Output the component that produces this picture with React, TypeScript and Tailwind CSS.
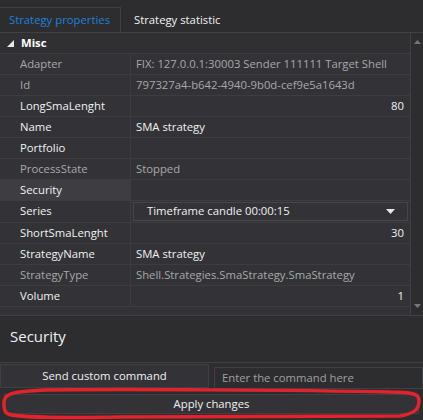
import React from 'react'

// property grid rows: [name, value, readOnly, kind]
type Row = { name: string; value?: string; ro?: boolean; kind?: 'num' | 'select'; selected?: boolean }

const rows: Row[] = [
  { name: 'Adapter', value: 'FIX: 127.0.0.1:30003 Sender 111111 Target Shell', ro: true },
  { name: 'Id', value: '797327a4-b642-4940-9b0d-cef9e5a1643d', ro: true },
  { name: 'LongSmaLenght', value: '80', kind: 'num' },
  { name: 'Name', value: 'SMA strategy' },
  { name: 'Portfolio' },
  { name: 'ProcessState', value: 'Stopped', ro: true },
  { name: 'Security', selected: true },
  { name: 'Series', value: 'Timeframe candle 00:00:15', kind: 'select' },
  { name: 'ShortSmaLenght', value: '30', kind: 'num' },
  { name: 'StrategyName', value: 'SMA strategy' },
  { name: 'StrategyType', value: 'Shell.Strategies.SmaStrategy.SmaStrategy', ro: true },
  { name: 'Volume', value: '1', kind: 'num' },
]

function GridRow({ r }: { r: Row }) {
  const label = r.ro ? 'text-[#a8a8a8]' : 'text-[#f1f1f1]'
  return (
    <div className={`flex border-b border-[#3c3c41] ${r.kind === 'select' ? 'h-[22px]' : 'h-[21px]'}`}>
      <div
        className={`w-[131px] shrink-0 pl-5 flex items-center border-r border-[#3c3c41] ${
          r.selected ? 'bg-[#3e3e42]' : ''
        } ${label}`}
      >
        {r.name}
      </div>
      {r.kind === 'select' ? (
        <div className="flex-1 px-[2px] py-[1px]">
          <div className="h-full border border-[#46464a] flex items-center pl-[13px] pr-[12px] text-[#f1f1f1]">
            <span className="flex-1">{r.value}</span>
            <svg width="9" height="5" viewBox="0 0 9 5">
              <path d="M0 0h9L4.5 5z" fill="#e8e8e8" />
            </svg>
          </div>
        </div>
      ) : (
        <div
          className={`flex-1 flex items-center whitespace-nowrap overflow-hidden ${
            r.kind === 'num' ? 'justify-end pr-[6px]' : 'pl-[5px]'
          } ${r.ro ? 'text-[#a8a8a8]' : 'text-[#f1f1f1]'}`}
        >
          {r.value}
        </div>
      )}
    </div>
  )
}

export default function App() {
  return (
    <div
      className="relative w-[423px] h-[420px] overflow-hidden bg-[#2d2d30] text-[11.3px] flex flex-col"
      style={{ fontFamily: '"Open Sans", "Noto Sans", sans-serif' }}
    >
      {/* tabs */}
      <div className="h-[33px] shrink-0 flex items-end border-b border-[#3f3f46]">
        <div className="h-[25px] w-[121px] border-t border-r border-[#3f3f46] flex items-center pl-[9px] pt-[1px] text-[#1c80d8]">
          Strategy properties
        </div>
        <div className="h-[25px] flex items-center pl-[13px] pt-[1px] text-[#f1f1f1]">Strategy statistic</div>
      </div>

      {/* property grid */}
      <div className="h-[283px] shrink-0 flex border-b border-[#3f3f46] bg-[#333337]">
        <div className="flex-1 flex flex-col">
          <div className="h-[21px] flex items-center border-b border-[#3c3c41] bg-[#303033]">
            <svg width="7" height="7" viewBox="0 0 7 7" className="ml-[7px] mr-[7px]">
              <path d="M7 0V7H0z" fill="#e8e8e8" />
            </svg>
            <span className="font-bold text-white">Misc</span>
          </div>
          {rows.map((r) => (
            <GridRow key={r.name} r={r} />
          ))}
        </div>
        <div className="w-[13px] shrink-0 border-l border-[#3f3f46] bg-[#2d2d30] flex flex-col items-center justify-between pt-[7px] pb-[7px]">
          <svg width="7" height="4" viewBox="0 0 7 4">
            <path d="M0 4h7L3.5 0z" fill="#777" />
          </svg>
          <svg width="7" height="4" viewBox="0 0 7 4">
            <path d="M0 0h7L3.5 4z" fill="#777" />
          </svg>
        </div>
      </div>

      {/* description */}
      <div className="h-[47px] shrink-0 flex items-center pl-[10px] pb-[6px] text-[15px] text-[#f1f1f1] border-b border-[#3f3f46]">
        Security
      </div>

      {/* command */}
      <div className="flex h-[27px] shrink-0 pt-[1px] gap-[5px]">
        <button className="w-[209px] h-[24px] bg-[#333337] border border-[#3f3f46] text-[#f1f1f1] text-[11.3px]">
          Send custom command
        </button>
        <div className="flex-1 mt-[3px] h-[22px] border border-[#3f3f46] bg-[#2d2d30] pl-[7px] flex items-center text-[#a0a0a0]">
          Enter the command here
        </div>
      </div>

      <div className="px-[4px] pt-[4px]">
        <button className="w-full h-[20px] bg-[#333337] border border-[#3f3f46] text-[#f1f1f1] text-[11.3px] flex items-center justify-center">
          Apply changes
        </button>
      </div>

      {/* red annotation */}
      <svg className="absolute left-0 top-[386px] pointer-events-none" width="423" height="34" viewBox="0 0 423 34">
        <path
          d="M45 4 C120 3 300 4 390 6 C412 6 419 8 419 14 C419 22 417 27 400 30 L120 31 C60 32 20 32 8 28 C3 26 3 14 6 11 C10 6 25 5 45 4 Z"
          fill="none"
          stroke="#e3222b"
          strokeWidth="3.5"
        />
      </svg>
    </div>
  )
}
